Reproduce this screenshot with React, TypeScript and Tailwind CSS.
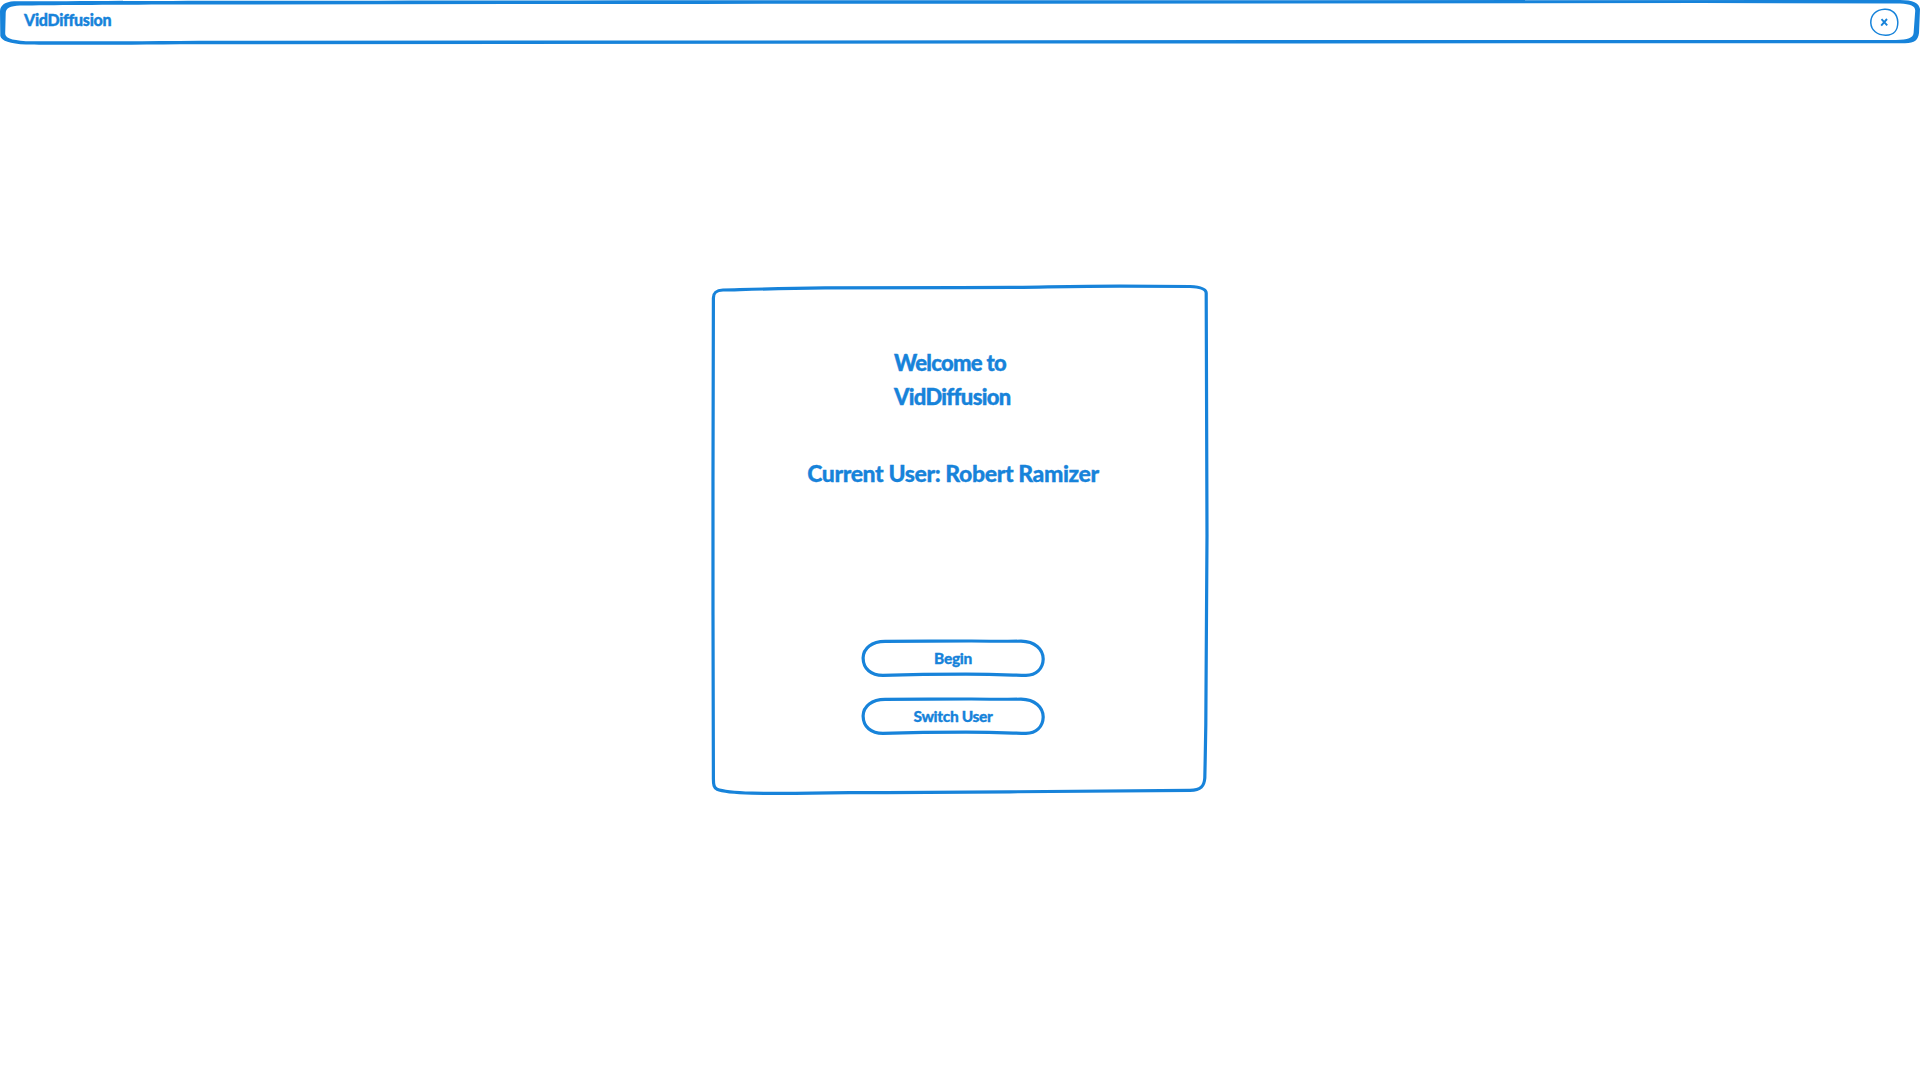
import type { ReactNode } from "react";

function HeaderFrame() {
  return (
    <svg className="pointer-events-none absolute inset-0" width="1920" height="46" viewBox="0 0 1920 46" fill="#1783da" aria-hidden="true">
      <path
        fillRule="evenodd"
        d="M0 11C0.5 5 5 2 14 1.3C300 0.4 900 0 1300 0.2L1900 0C1913 0 1919 3 1920 9L1919 33C1918 40 1915 43 1905 43.3L1300 43.4L180 44.2C100 45 50 45 26 44.6C10 43.8 1.5 41 0.3 36ZM5.7 13L5.2 33C5 38 10 40 26 41.2C80 41.6 140 41.2 220 40.8L1300 40L1896 40C1908 39.8 1913 38 1913.6 33L1915.2 11C1915.6 6 1911 4.2 1900 3.4L1700 3.1L700 3.9L180 4.5C100 4.8 50 5 20 5.6C10 6.2 6 8 5.7 13Z"
      />
    </svg>
  );
}

function PanelFrame() {
  return (
    <svg className="pointer-events-none absolute inset-0 overflow-visible" width="500" height="514" viewBox="0 0 500 514" fill="none" stroke="#1783da" strokeLinecap="round" strokeLinejoin="round" aria-hidden="true">
      <path
        strokeWidth="3.2"
        d="M3.4 13C3.4 7.5 6 5.4 13 5C38 4.4 65 3.5 115 2.9C190 2.5 240 3 300 2.4C350 1.7 370 1.1 410 1.1C440 1.1 460 1.5 480 1.5C490 2 496 3.6 496.2 8C496.5 60 497.2 150 497 250C496.8 350 496.2 400 495.8 440C495.4 465 495.2 475 494.8 493C494.2 501 491 505.2 480 505.4C430 505.4 380 506 300 506.8C230 507.6 190 507.5 140 507.7C110 508.2 70 508.6 42 508.2C24 507.6 12 506.2 7 504.2C4 502.4 3.4 500 3.4 494C3.2 430 3.4 380 3 330C2.6 220 3.4 130 3.4 13Z"
      />
    </svg>
  );
}

function SketchButton({ children }: { children: ReactNode }) {
  return (
    <button className="relative flex h-[38px] w-[184px] justify-center text-[15.5px] leading-[39px] font-black tracking-[-0.35px] [-webkit-text-stroke:0.3px_#1783da]">
      <svg className="pointer-events-none absolute inset-0" width="184" height="38" viewBox="0 0 184 38" fill="none" stroke="#1783da" strokeWidth="3.2" aria-hidden="true">
        <path d="M24 2.3C60 2.3 75 2 110 2C135 2.3 145 2.3 160 2.2C174 2.6 182 10 182.2 20C182 30 175 36.2 165 36.4C148 36 135 35.4 105 35.2C75 35.2 48 35.6 22 36.4C10 36.4 2.3 30 2.1 19C2.3 9 11 2.4 24 2.3Z" />
      </svg>
      {children}
    </button>
  );
}

export default function App() {
  return (
    <div className="flex h-[1080px] w-[1920px] flex-col overflow-hidden bg-white font-['Lato',sans-serif] text-[#1783da]">
      <header className="relative flex h-[46px] shrink-0 justify-between pr-[21px] pl-6">
        <HeaderFrame />
        <h1 className="pt-[6px] text-[16px] leading-[27px] font-black tracking-[-0.3px] [-webkit-text-stroke:0.4px_#1783da]">VidDiffusion</h1>
        <button aria-label="Close" className="mt-2 h-7 w-[29px]">
          <svg width="29" height="28" viewBox="0 0 29 28" fill="none" stroke="#1783da">
            <path strokeWidth="1.5" d="M14.5 1.2C22 0.7 27.4 6 27.8 14C28 22 24 27 16 27.2C7 27.4 1.2 22 0.8 15C0.6 7 6 1.6 14.5 1.2Z" />
            <path strokeWidth="1.9" d="M11.5 11.2L17.2 17.4M17 11L11.2 17.6" />
          </svg>
        </button>
      </header>

      <main className="flex justify-center pt-[239px]">
        <section className="relative flex h-[514px] w-[500px] flex-col items-center pt-[61px] pr-[14px]">
          <PanelFrame />
          <h2 className="w-[118px] text-[22px] leading-[34px] font-black tracking-[-0.7px] whitespace-nowrap [-webkit-text-stroke:0.4px_#1783da]">
            <span className="block">Welcome to</span>
            <span className="block">VidDiffusion</span>
          </h2>
          <p className="mt-[42px] text-[23px] leading-[34px] font-black tracking-[-0.4px] whitespace-nowrap [-webkit-text-stroke:0.3px_#1783da]">Current User: Robert Ramizer</p>
          <div className="mt-[149px] flex flex-col gap-5">
            <SketchButton>Begin</SketchButton>
            <SketchButton>Switch User</SketchButton>
          </div>
        </section>
      </main>
    </div>
  );
}
